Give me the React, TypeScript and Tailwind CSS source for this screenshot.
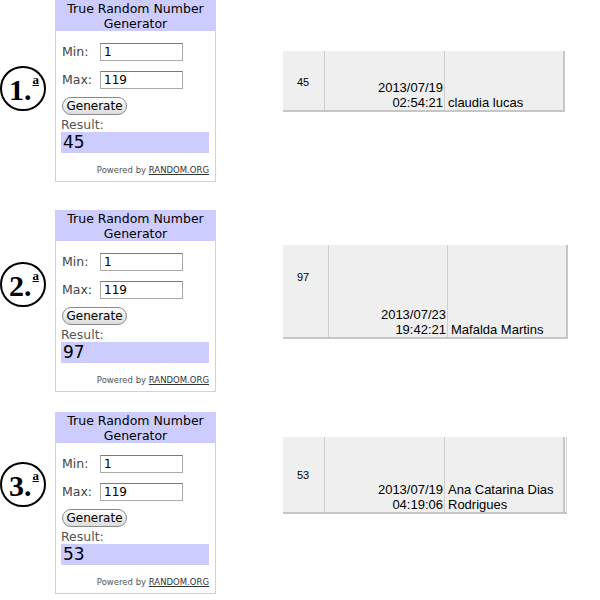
import React from "react";

type Row = {
  n: string;
  result: string;
  date: string;
  time: string;
  name: string;
  rowMt: string;
  circleMt: string;
  tableMt: string;
  tableH: string;
  numPt: string;
  cols: [string, string, string];
  extra?: boolean;
};

const rows: Row[] = [
  {
    n: "1",
    result: "45",
    date: "2013/07/19",
    time: "02:54:21",
    name: "claudia lucas",
    rowMt: "mt-0",
    circleMt: "mt-[66px]",
    tableMt: "mt-[51px]",
    tableH: "h-[61px]",
    numPt: "pt-[24px]",
    cols: ["w-[42px]", "w-[120px]", "w-[120px]"],
  },
  {
    n: "2",
    result: "97",
    date: "2013/07/23",
    time: "19:42:21",
    name: "Mafalda Martins",
    rowMt: "mt-[28px]",
    circleMt: "mt-[52px]",
    tableMt: "mt-[35px]",
    tableH: "h-[94px]",
    numPt: "pt-[25px]",
    cols: ["w-[46px]", "w-[119px]", "w-[120px]"],
  },
  {
    n: "3",
    result: "53",
    date: "2013/07/19",
    time: "04:19:06",
    name: "Ana Catarina Dias Rodrigues",
    rowMt: "mt-[20px]",
    circleMt: "mt-[50px]",
    tableMt: "mt-[25px]",
    tableH: "h-[77px]",
    numPt: "pt-[31px]",
    cols: ["w-[42px]", "w-[120px]", "w-[120px]"],
    extra: true,
  },
];

function Circle({ n, mt }: { n: string; mt: string }) {
  return (
    <div
      className={`${mt} w-[46px] h-[45px] shrink-0 rounded-full border-2 border-black flex items-center justify-center`}
      style={{ fontFamily: '"Liberation Serif", "DejaVu Serif", serif' }}
    >
      <span className="text-[30px] font-bold leading-none text-black ml-[2px] mt-[2px]">
        {n}.
      </span>
      <span className="text-[13px] font-bold leading-none text-black underline self-start mt-[5px] ml-[1px]">
        a
      </span>
    </div>
  );
}

function Widget({ result }: { result: string }) {
  return (
    <div
      className="w-[161px] shrink-0 border border-[#ccccff] bg-white text-black"
      style={{ fontFamily: '"DejaVu Sans", Verdana, sans-serif' }}
    >
      <div className="bg-[#ccccff] h-[30px] text-center text-[12.5px] leading-[15px]">
        True Random Number
        <br />
        Generator
      </div>
      <div className="px-[5px] pt-[12px] pb-[6px]">
        <div className="flex items-center h-[18px]">
          <span className="w-[39px] pl-[1px] text-[12.5px] text-[#444]">Min:</span>
          <div className="w-[83px] h-[18px] border border-[#a9a9a9] border-t-[#7a7a7a] bg-white text-[12px] leading-[16px] pl-[3px]">
            1
          </div>
        </div>
        <div className="flex items-center h-[18px] mt-[10px]">
          <span className="w-[39px] pl-[1px] text-[12.5px] text-[#444]">Max:</span>
          <div className="w-[83px] h-[18px] border border-[#a9a9a9] border-t-[#7a7a7a] bg-white text-[12px] leading-[16px] pl-[3px]">
            119
          </div>
        </div>
        <div className="mt-[8px] ml-[1px] w-[65px] h-[18px] rounded-full border border-[#8a8a8a] bg-gradient-to-b from-white to-[#dcdcdc] text-[12px] leading-[16px] text-center">
          Generate
        </div>
        <div className="mt-[2px] text-[12.5px] leading-[15px] text-[#555]">
          Result:
        </div>
        <div className="h-[21px] w-[148px] bg-[#ccccff] text-[17px] leading-[21px] pl-[2px]">
          {result}
        </div>
        <div className="mt-[12px] text-right pr-[1px] text-[8.5px] leading-[10px] text-[#555]">
          Powered by <span className="underline text-[#333]">RANDOM.ORG</span>
        </div>
      </div>
    </div>
  );
}

function Table({ r }: { r: Row }) {
  return (
    <div
      className={`${r.tableMt} ${r.tableH} ml-[67px] flex bg-[#efefef] border-b-2 border-[#c6c6c6] text-[13px] leading-[15px] text-black`}
      style={{ fontFamily: '"Liberation Sans", Arial, sans-serif' }}
    >
      <div className={`${r.cols[0]} ${r.numPt} pl-[14px] text-[11px] leading-[15px] border-r border-[#cfcfcf]`}>
        {r.result}
      </div>
      <div
        className={`${r.cols[1]} flex flex-col justify-end items-end pr-[1px] border-r border-[#cfcfcf]`}
      >
        <span>{r.date}</span>
        <span>{r.time}</span>
      </div>
      <div
        className={`${r.cols[2]} flex flex-col justify-end pl-[3px] border-r-2 border-[#c6c6c6]`}
      >
        <span>{r.name}</span>
      </div>
      {r.extra ? <div className="w-[2px] border-r border-[#cfcfcf] bg-white" /> : null}
    </div>
  );
}

export default function App() {
  return (
    <div className="w-[600px] h-[600px] bg-white overflow-hidden">
      {rows.map((r) => (
        <div key={r.n} className={`flex items-start ${r.rowMt}`}>
          <Circle n={r.n} mt={r.circleMt} />
          <div className="ml-[9px]">
            <Widget result={r.result} />
          </div>
          <Table r={r} />
        </div>
      ))}
    </div>
  );
}
